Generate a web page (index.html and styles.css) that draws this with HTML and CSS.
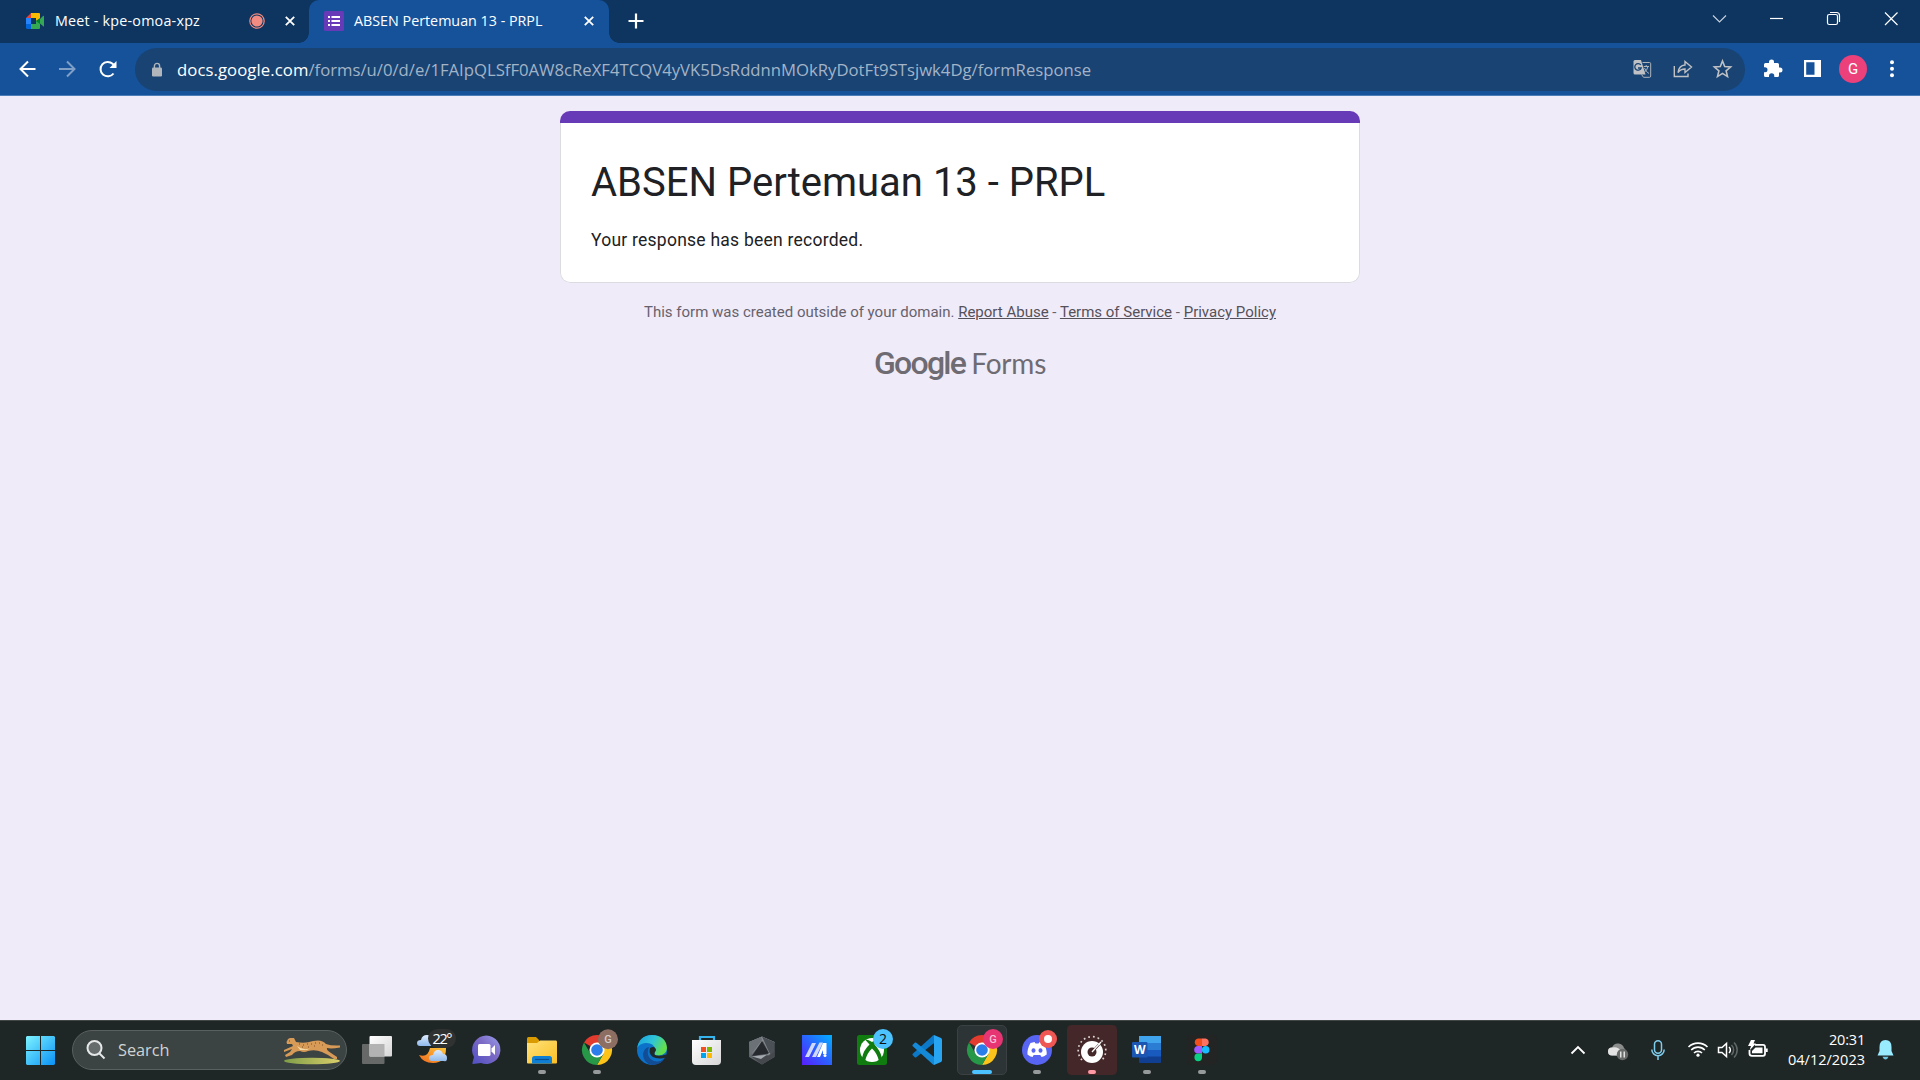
FILE: index.html
```html
<!DOCTYPE html>
<html lang="id">
<head>
<meta charset="utf-8">
<title>ABSEN Pertemuan 13 - PRPL</title>
<link rel="stylesheet" href="styles.css">
</head>
<body>
<svg class="defs" width="0" height="0">
  <defs>
    <linearGradient id="winblue" x1="0" y1="0" x2="1" y2="1"><stop offset="0" stop-color="#7df3ff"/><stop offset="1" stop-color="#0a91f5"/></linearGradient>
    <linearGradient id="chatg" x1="1" y1="0" x2="0" y2="1"><stop offset="0" stop-color="#9aa0ee"/><stop offset=".45" stop-color="#7b69c4"/><stop offset="1" stop-color="#4f4fc4"/></linearGradient>
    <linearGradient id="folder" x1="0" y1="0" x2="1" y2="1"><stop offset="0" stop-color="#ffe27a"/><stop offset="1" stop-color="#fbbf24"/></linearGradient>
    <linearGradient id="edgetop" x1="0" y1="0" x2="1" y2=".4"><stop offset="0" stop-color="#1a9fe0"/><stop offset=".55" stop-color="#2fc4d8"/><stop offset="1" stop-color="#63df4c"/></linearGradient>
    <linearGradient id="asus" x1="0" y1="1" x2="1" y2="0"><stop offset="0" stop-color="#5a1cff"/><stop offset=".5" stop-color="#2b62ff"/><stop offset="1" stop-color="#00b0ff"/></linearGradient>
    <linearGradient id="white" x1="0" y1="0" x2="1" y2="1"><stop offset="0" stop-color="#fff"/><stop offset="1" stop-color="#d6d6d6"/></linearGradient>
    <linearGradient id="cloud" x1="0" y1="0" x2="0" y2="1"><stop offset="0" stop-color="#dcebff"/><stop offset="1" stop-color="#8fb9ea"/></linearGradient>
    <linearGradient id="moon" x1="0" y1="1" x2="1" y2="0"><stop offset="0" stop-color="#f0691c"/><stop offset="1" stop-color="#ffc53a"/></linearGradient>
    <linearGradient id="grass" x1="0" y1="0" x2="1" y2="0"><stop offset="0" stop-color="#7f9d48"/><stop offset="1" stop-color="#d9cf6a"/></linearGradient>
    <g id="chrome">
      <path d="M27 30 14 22.5A15 15 0 0 1 40 22.5H27Z" fill="#e33b2e"/>
      <path d="M40 22.5A15 15 0 0 1 27 45L33.5 33.7 27 22.5Z" fill="#fcc31b"/>
      <path d="M14 22.5A15 15 0 0 0 27 45L33.5 33.7 27 30 20.5 33.7Z" fill="#279847"/>
      <circle cx="27" cy="30" r="7.6" fill="#fff"/><circle cx="27" cy="30" r="5.8" fill="#2b7de9"/>
    </g>
  </defs>
</svg>

<header class="browser">
  <div class="tabstrip">
    <div class="tab">
      <svg class="favicon" width="20" height="20" viewBox="0 0 20 20"><path d="M1 7 6 2V7Z" fill="#ea4335"/><path d="M6 2H14Q15 2 15 3V8L11 10V7H6Z" fill="#fbbc04"/><path d="M1 7H6V13H1Z" fill="#2684fc"/><path d="M1 13H6V18H2.500Q1 18 1 16.500Z" fill="#0066da"/><path d="M6 13H11V10L15 8 18 5Q19 4.500 19 5.500V15Q19 16 18 15L15 12.500V17Q15 18 14 18H6Z" fill="#34a853"/><path d="M11 10 15 7V13Z" fill="#00832d"/></svg>
      <span class="tab-title meet-title">Meet - kpe-omoa-xpz</span>
      <svg class="rec" width="16" height="16" viewBox="0 0 16 16"><circle cx="8" cy="8" r="7.200" fill="none" stroke="#f28b82" stroke-width="1.200"/><circle cx="8" cy="8" r="5.600" fill="#f28b82"/></svg>
      <svg class="x" width="10" height="10" viewBox="0 0 10 10"><path d="M.8.8 9.200 9.200M9.200.8.8 9.200"/></svg>
    </div>
    <div class="tab active">
      <svg class="favicon" width="20" height="20" viewBox="0 0 20 20"><rect width="20" height="20" rx="1.500" fill="#673ab7"/><path d="M4 5H6V7H4ZM4 9H6V11H4ZM4 13H6V15H4ZM7.500 5H16V7H7.500ZM7.500 9H16V11H7.500ZM7.500 13H16V15H7.500Z" fill="#fff"/></svg>
      <span class="tab-title form-title">ABSEN Pertemuan 13 - PRPL</span>
      <svg class="x" width="10" height="10" viewBox="0 0 10 10"><path d="M.8.8 9.200 9.200M9.200.8.8 9.200"/></svg>
    </div>
    <svg class="plus" width="16" height="16" viewBox="0 0 16 16"><path d="M8 .5V15.500M.5 8H15.500" stroke="#fff" stroke-width="2.200"/></svg>
    <svg class="controls" width="190" height="30" viewBox="1710 5 190 30" fill="none" stroke="#fff" stroke-width="1.200">
      <path d="M1713 15.500 1719.500 22 1726 15.500" stroke="#c4d0dd"/><path d="M1770 18.500H1783"/>
      <rect x="1827.500" y="14.500" width="10" height="10" rx="1.800"/><path d="M1830 12.500H1836.500Q1839.500 12.500 1839.500 15.500V22"/>
      <path d="M1885 12.500 1897.500 25M1897.500 12.500 1885 25"/>
    </svg>
  </div>
  <div class="toolbar">
    <svg class="nav" width="115" height="30" viewBox="10 54 115 30" fill="none" stroke="#fff" stroke-width="2">
      <path d="M35.500 69H21M28 61.500 20.500 69 28 76.500"/>
      <path d="M59 69H74M67 61.500 74.500 69 67 76.500" stroke="#7f9fc7"/>
      <path d="M113.500 73.500A7.200 7.200 0 1 1 112.600 63.800L115.200 66.400"/><path d="M116.500 61V68H109.500Z" fill="#fff" stroke="none"/>
    </svg>
    <div class="omnibox">
      <svg class="lock" width="12" height="15" viewBox="0 0 12 15"><rect x="1" y="5.500" width="10" height="9" rx="1.200" fill="#b0b6bb"/><path d="M3.400 6.500V4A2.600 2.600 0 0 1 8.600 4V6.500" fill="none" stroke="#b0b6bb" stroke-width="1.400"/></svg>
      <div class="url"><span class="host">docs.google.com</span><span class="path">/forms/u/0/d/e/1FAIpQLSfF0AW8cReXF4TCQV4yVK5DsRddnnMOkRyDotFt9STsjwk4Dg/formResponse</span></div>
      <svg class="actions" width="102" height="24" viewBox="1631 58 102 24">
        <path d="M1635 61H1641L1645.500 75.500H1635Q1633.500 75.500 1633.500 74V62.500Q1633.500 61 1635 61Z" fill="#bfc1c4"/>
        <path d="M1642.500 63.500H1649.500Q1650.700 63.500 1650.700 64.700V77Q1650.700 78.300 1649.500 78.300H1643.500L1641.500 75.500" fill="none" stroke="#aeb4bb" stroke-width="1"/>
        <path d="M1640.800 66A3.300 3.300 0 1 0 1641.200 69H1638" fill="none" stroke="#194373" stroke-width="1.300"/>
        <path d="M1643.700 67.500H1649M1646.200 66V67.500M1648 67.500Q1647 71.500 1644.500 73M1644.500 69Q1646 73 1649 74.500" fill="none" stroke="#aeb4bb" stroke-width="1"/>
        <path d="M1674.300 67V77.500H1688V74.500M1678 73.500Q1679 66.500 1685 66V62.500L1691.500 68 1685 73.500V70Q1680.500 70 1678 73.500Z" fill="none" stroke="#bfc1c4" stroke-width="1.400"/>
        <path d="M1722.500 62 1724.700 67.600 1730.600 68 1726.100 71.800 1727.500 77.600 1722.500 74.400 1717.500 77.600 1718.900 71.800 1714.400 68 1720.300 67.600Z" fill="none" stroke="#bfc1c4" stroke-width="1.600"/>
      </svg>
    </div>
    <svg class="ext" width="66" height="30" viewBox="1760 54 66 30">
      <path d="M1765.500 63H1769V62A2.500 2.500 0 0 1 1774 62V63H1777.500Q1779 63 1779 64.500V67.500H1780A2.500 2.500 0 0 1 1780 72.500H1779V75.500Q1779 77 1777.500 77H1774.300V76A2.500 2.500 0 0 0 1769 76V77H1765.500Q1764 77 1764 75.500V72.300H1765A2.500 2.500 0 0 0 1765 67.300H1764V64.500Q1764 63 1765.500 63Z" fill="#fff"/>
      <path d="M1804 60H1821V77H1804ZM1806.200 62.300V74.700H1814.500V62.300Z" fill="#fff" fill-rule="evenodd"/>
    </svg>
    <div class="avatar">G</div>
    <svg class="dots" width="6" height="20" viewBox="0 0 6 20" fill="#fff"><circle cx="3" cy="3.300" r="2"/><circle cx="3" cy="9.800" r="2"/><circle cx="3" cy="16.300" r="2"/></svg>
  </div>
</header>

<main class="page">
  <section class="card">
    <div class="card-accent"></div>
    <div class="card-body">
      <h1>ABSEN Pertemuan 13 - PRPL</h1>
      <p>Your response has been recorded.</p>
    </div>
  </section>
  <div class="disclaimer">This form was created outside of your domain. <u>Report Abuse</u> - <u>Terms of Service</u> - <u>Privacy Policy</u></div>
  <div class="logo"><span class="google">Google</span><span class="forms">Forms</span></div>
</main>

<footer class="taskbar">
  <svg class="start" width="29" height="29" viewBox="0 0 29 29"><path d="M1 0H14V14H0V1ZM15 0H28L29 1V14H15ZM0 15H14V29H1L0 28ZM15 15H29V28L28 29H15Z" fill="url(#winblue)"/></svg>
  <div class="search">
    <svg width="20" height="20" viewBox="0 0 20 20" fill="#666b6c" stroke="#e6e8e8" stroke-width="2"><circle cx="8.500" cy="8" r="7"/><path d="M13.500 13.500 18.500 18.500"/></svg>
    <span class="search-label">Search</span>
    <svg class="cheetah" width="60" height="34" viewBox="280 1036 60 34">
      <ellipse cx="312" cy="1064" rx="28" ry="3.200" fill="url(#grass)"/>
      <path d="M288 1042 290 1041 294 1041 296 1045Q305 1047 313 1044Q322 1042 326 1047Q331 1049 340 1048.500V1050.500Q331 1052 327 1051Q326 1053 331 1056L337 1060V1062H334L328 1058 322 1055Q315 1052 308 1054Q304 1056 300 1054Q295 1054 292 1058L286 1060 285 1058 290 1055 292 1052 284 1055V1053L293 1049 292 1047 287 1047 286.500 1045Z" fill="#d79b57"/>
      <path d="M297 1049Q305 1055 312 1050L307 1053 300 1053Z" fill="#f4d9a6"/>
      <path d="M299 1047h1m3 1h1m3-1h1m3 0h1m3-1h1m3 0h1m2 2h1m-9 1h1m-7 1h1m-7 0h1m-14-6h1" stroke="#7c4c25" stroke-width="1"/>
    </svg>
  </div>
  <nav class="apps">
    <svg viewBox="0 0 55 60"><rect x="12" y="24" width="22.500" height="20" rx="1" fill="#676868"/><rect x="19.500" y="16" width="22.500" height="20.500" rx="1" fill="url(#white)"/><path d="M19.500 24H34.500V36.500H19.500Z" fill="#b3b3b3"/></svg>
    <svg viewBox="0 0 55 60"><path d="M15 26Q12 26 12 23T16 20Q17 15 22 15T27 20V26Z" fill="url(#cloud)"/><path d="M14 35Q23 38 25 28H41Q41 43 28 43Q18 43 14 35Z" fill="url(#moon)"/><path d="M27 41Q24 41 24 38T28 35Q29 30 33 30T38 34Q42 34 42 38T39 41Z" fill="url(#cloud)"/><rect x="23" y="9" width="28" height="19" rx="9.500" fill="#303131"/><text x="27.500" y="24" class="temp" textLength="20">22°</text></svg>
    <svg viewBox="0 0 55 60"><path d="M13 44Q12 44 12.500 42.500L14 37A14.200 14.200 0 1 1 21 43Z" fill="url(#chatg)"/><rect x="18" y="24" width="12.500" height="12" rx="1.500" fill="#fff"/><path d="M31.500 28.500 35 25V35L31.500 31.500Z" fill="#fff"/></svg>
    <svg viewBox="0 0 55 60"><path d="M12 18.500Q12 17 13.500 17H21L24 20V26H12Z" fill="#d99b00"/><path d="M12 23H22L25 20.500H41Q42 20.500 42 22V42.500Q42 43.500 41 43.500H13Q12 43.500 12 42.500Z" fill="url(#folder)"/><path d="M17 43.500V38.500Q17 36 19.500 36H34.500Q37 36 37 38.500V43.500Z" fill="#0f7fd4"/><path d="M20 39.500H34" stroke="#0a4f91" stroke-width="1.200"/><rect class="dot" x="23" y="50" width="8" height="4" rx="2"/></svg>
    <svg viewBox="0 0 55 60"><use href="#chrome"/><circle cx="38" cy="19.300" r="10" fill="#8d6e63"/><text x="38" y="23.300" class="badge" fill="#d7ccc8">G</text><rect class="dot" x="23" y="50" width="8" height="4" rx="2"/></svg>
    <svg viewBox="0 0 55 60"><circle cx="27" cy="30" r="15" fill="#0c72c9"/><path d="M12.200 28Q14 15.500 27 15Q41 15.500 42 28Q41.500 35 34 35.500Q29 35.500 29.500 33Q31 31 30.500 29Q28 22 20 23Q14 24 12.200 28Z" fill="url(#edgetop)"/><path d="M24 27Q20 37 29 41Q35 42.500 40 38Q36 45 27 45Q18 43 18 34Q19 28 24 27Z" fill="#124c94"/><path d="M25 28Q30 25 31 30Q29 33 29.500 34.500Q32 37 41 34.500L42 36Q40 38.500 36 38.500Q26 39 24.500 32Z" fill="#20282a"/></svg>
    <svg viewBox="0 0 55 60"><path d="M20 22V17H34V22" fill="none" stroke="#35b4ee" stroke-width="2.200"/><path d="M12 20H41V41Q41 45 37 45H16Q12 45 12 41Z" fill="url(#white)"/><path d="M21 27H26V32H21Z" fill="#f25022"/><path d="M27 27H32V32H27Z" fill="#7fba00"/><path d="M21 33H26V38H21Z" fill="#00a4ef"/><path d="M27 33H32V38H27Z" fill="#ffb900"/></svg>
    <svg viewBox="0 0 55 60"><path d="M27 16.500 39.500 22V37L27 44.500 14 37V22Z" fill="#60656b"/><path d="M27 16.500 39.500 22 35 35 28 21 17 34 14 22Z" fill="#858b91"/><path d="M27 21 34 33.500 17 36Z" fill="#262a2e"/><path d="M14 22 26 17 27 20 15 36Z" fill="#6b7177"/><path d="M17 37 34 35.500 39 31V37L27 44.500Z" fill="#45494e"/><path d="M17 36.500 34 34.500 37 31 26 39Z" fill="#a4aab0"/><path d="M27 16.500 39 22V32L35 34Z" fill="#4b5056"/></svg>
    <svg viewBox="0 0 55 60"><path d="M12 15H42V45H12Z" fill="url(#asus)"/><path d="M15 37 22 23H26L19 37ZM22 37 29.500 22.500H33L26 37Z" fill="#cfd8ff"/><path d="M27 37 33 23H36.500V34H33V30L30 37Z" fill="#fff"/><circle cx="35" cy="35.500" r="1.500" fill="#fff"/></svg>
    <svg viewBox="0 0 55 60"><rect x="12" y="15" width="30" height="30" rx="2.500" fill="#107c10"/><circle cx="27" cy="30" r="12" fill="#fff"/><path d="M20 19.500Q23 19 27 22Q31 19 34 19.500L29.500 24.500Q35 30 37 38L34 41Q32 33 27 28.500Q22 33 20 41L17 38Q18.500 30 24.500 24.500Z" fill="#107c10"/><circle cx="38" cy="19" r="10" fill="#4cc2ff"/><text x="38" y="24" class="count">2</text></svg>
    <svg viewBox="0 0 55 60"><path d="M34 15 41 18Q42 18.500 42 20V40Q42 41.500 41 42L34 45Z" fill="#27a5f2"/><path d="M34 15V23L16 37.500 15 37.500 12.500 35V34L33 15.500Z" fill="#0b79c8"/><path d="M34 45V37L16 22.500H15L12.500 25V26L33 44.500Z" fill="#1389d8"/></svg>
    <svg viewBox="0 0 55 60"><rect x="2.500" y="5.500" width="49" height="49" rx="4.500" fill="#2d3435" stroke="#3b4142"/><use href="#chrome"/><circle cx="38" cy="19" r="10" fill="#e73472"/><text x="38" y="23" class="badge" fill="#f8c2d5">G</text><rect x="17" y="50" width="20" height="4" rx="2" fill="#4cc2ff"/></svg>
    <svg viewBox="0 0 55 60"><circle cx="27" cy="30" r="15" fill="#5865f2"/><path d="M20.500 23 24.500 22 25.500 23.500H28.500L29.500 22 33.500 23Q37 29 36.700 34.500Q34 36.800 31.500 37L30.300 35H23.700L22.500 37Q20 36.800 17.500 34.500Q17 29 20.500 23Z" fill="#fff"/><ellipse cx="23.500" cy="30.500" rx="2" ry="2.300" fill="#5865f2"/><ellipse cx="30.500" cy="30.500" rx="2" ry="2.300" fill="#5865f2"/><circle cx="38" cy="19" r="9" fill="#ef5754"/><circle cx="38" cy="19" r="4" fill="#fff"/><rect class="dot" x="23" y="50" width="8" height="4" rx="2"/></svg>
    <svg viewBox="0 0 55 60"><rect x="2" y="5" width="50" height="50" rx="4.500" fill="#442728"/><circle cx="27" cy="32" r="11" fill="#fff"/><circle cx="27" cy="32" r="4.500" fill="#442728"/><path d="M28.500 30.500 34 24.500" stroke="#442728" stroke-width="2.400"/><path d="M27 32 36 22" stroke="#fff" stroke-width="1.300"/><path d="M17 40A13.800 13.800 0 1 1 37 40" fill="none" stroke="#ddd5d5" stroke-width="1.700" stroke-dasharray="1.700 3"/><rect x="23" y="50" width="8" height="4" rx="2" fill="#ff99a4"/></svg>
    <svg viewBox="0 0 55 60"><rect x="19" y="16" width="22" height="27" rx="1" fill="#103f91"/><path d="M19 16H41V23H19Z" fill="#41a5ee"/><path d="M19 23H41V30H19Z" fill="#2b7cd3"/><path d="M19 30H41V36.500H19Z" fill="#185abd"/><rect x="12" y="22" width="15.500" height="15.500" rx="1" fill="#1b56b3"/><text x="19.700" y="34.300" class="word">W</text><rect class="dot" x="23" y="50" width="8" height="4" rx="2"/></svg>
    <svg viewBox="0 0 55 60"><rect x="12" y="15" width="30" height="30" rx="5" fill="#232424"/><path d="M27 18.500H23A3.800 3.800 0 0 0 23 26H27Z" fill="#f24e1e"/><path d="M27 18.500H30.500A3.800 3.800 0 0 1 30.500 26H27Z" fill="#ff7262"/><path d="M27 26H23A3.800 3.800 0 0 0 23 33.600H27Z" fill="#a259ff"/><circle cx="30.700" cy="29.800" r="3.800" fill="#1abcfe"/><path d="M27 33.600H23A3.800 3.800 0 1 0 27 37.500Z" fill="#0acf83"/><rect class="dot" x="23" y="50" width="8" height="4" rx="2"/></svg>
  </nav>
  <svg class="tray" width="206" height="60" viewBox="1566 0 206 60" fill="none" stroke="#fff" stroke-width="1.800">
    <path d="M1571.500 33.500 1578 27 1584.500 33.500"/>
    <path d="M1612 35.500A4 4 0 0 1 1612 27.500Q1614 23 1618.500 23.500Q1623 24 1624 28Q1627 30 1625 35.500Z" fill="#8b8d8d" stroke="none"/><path d="M1612 35.500A4 4 0 0 1 1612 27.500Q1618 26 1621 31V35.500Z" fill="#e3e3e3" stroke="none"/><circle cx="1622.500" cy="34.500" r="5.700" fill="#686a6a" stroke="none"/><path d="M1620.800 31.500V37.500M1624.200 31.500V37.500" stroke-width="1.200"/>
    <g stroke="#7fcdec" stroke-width="1.500"><rect x="1654.500" y="20.800" width="7" height="12.500" rx="3.500"/><path d="M1651.800 29.500A6.200 6.200 0 0 0 1664.200 29.500M1658 36V40"/></g>
    <g stroke-width="1.600"><path d="M1688.500 27A13.500 13.500 0 0 1 1707.500 27M1691.200 30A9.500 9.500 0 0 1 1704.800 30M1694 33A5.700 5.700 0 0 1 1702 33"/><circle cx="1698" cy="35.200" r="1.600" fill="#fff" stroke="none"/></g>
    <g stroke-width="1.500"><path d="M1718.500 27.500H1722L1726.500 23.500V36.500L1722 32.500H1718.500Z"/><path d="M1729 27A4 4 0 0 1 1729 33"/><path d="M1731.500 25A7 7 0 0 1 1731.500 35M1734 22.500A10.500 10.500 0 0 1 1734 37.500" stroke="#606767"/></g>
    <path d="M1755 24.800H1763Q1765 24.800 1765 27V33.500Q1765 35.800 1763 35.800H1752Q1749.500 35.800 1749.500 33.500V30"/><path d="M1755.500 27.500H1762.500V33.300H1752V31Z" fill="#fff" stroke="none"/><path d="M1766.700 28.500V32" stroke-width="2"/><path d="M1751 20H1755L1753.500 23.500H1756L1749.500 30.500 1751 26H1748Z" fill="#fff" stroke="none"/>
  </svg>
  <div class="clock"><span class="time">20:31</span><span class="date">04/12/2023</span></div>
  <svg class="bell" width="17" height="20" viewBox="0 0 17 20"><path d="M8.500 0Q14.500 0 14.500 7V11L16.500 15.500H.5L2.500 11V7Q2.500 0 8.500 0Z" fill="#99ebff"/><path d="M5.500 16.800H11.500Q10.500 19.500 8.500 19.500T5.500 16.800Z" fill="#6fc6e0"/></svg>
</footer>
</body>
</html>
```
FILE: styles.css
```css
* { box-sizing: border-box; }
body { margin: 0; width: 1920px; height: 1080px; overflow: hidden; display: flex; flex-direction: column; background: #f0ebf8; font-family: "Open Sans", "Noto Sans", sans-serif; }
svg { display: block; flex: none; }
.defs { position: absolute; }
.browser { height: 96px; flex: none; background: #15529a; border-bottom: 1px solid #4b7eb8; color: #fff; }
.tabstrip { height: 43px; display: flex; align-items: center; background: #0d3560; }
.tab { width: 309px; height: 43px; display: flex; align-items: center; padding: 0 14px 1px 25px; font-size: 14.3px; white-space: nowrap; }
.tab.active { width: 300px; padding: 0 15px 1px 15px; background: #15529a; border-radius: 10px 10px 0 0; position: relative; }
.tab.active::before, .tab.active::after { content: ""; position: absolute; bottom: 0; width: 10px; height: 10px; }
.tab.active::before { left: -10px; background: radial-gradient(circle at 0 0, transparent 9.5px, #15529a 10px); }
.tab.active::after { right: -10px; background: radial-gradient(circle at 100% 0, transparent 9.5px, #15529a 10px); }
.tab-title { margin: 0 auto 2px 10px; }
.meet-title { letter-spacing: .22px; }
.rec { margin-right: 20px; }
.x { fill: none; stroke: #fff; stroke-width: 1.8; }
.plus { margin: 0 auto 1px 19px; }
.controls { margin-right: 20px; margin-bottom: 3px; }
.toolbar { height: 52px; display: flex; align-items: center; padding-left: 10px; }
.omnibox { width: 1610px; height: 43px; margin-left: 10px; padding: 0 12px 0 16px; border-radius: 22px; background: #194373; display: flex; align-items: center; }
.url { margin: 1px auto 0 14px; font-size: 16.7px; color: #a3b4c7; white-space: nowrap; display: flex; }
.host { color: #fff; letter-spacing: .08px; }
.ext { margin-left: 15px; }
.avatar { width: 28px; height: 28px; margin-left: 13px; border-radius: 50%; background: #ec407a; font: 15px/28px Roboto, sans-serif; text-align: center; }
.dots { margin-left: 22px; }
.page { flex: 1; display: flex; flex-direction: column; align-items: center; padding-top: 15px; font-family: Roboto, sans-serif; }
.card { width: 800px; height: 172px; border-radius: 10px; overflow: hidden; display: flex; flex-direction: column; color: #202124; }
.card-accent { height: 12px; background: #673ab7; }
.card-body { flex: 1; padding: 35px 30px 0; background: #fff; border: 1px solid #dadce0; border-top: 0; border-radius: 0 0 10px 10px; }
h1 { margin: 0; font-size: 40px; font-weight: 400; line-height: 50px; }
p { margin: 20px 0 0; font-size: 17.5px; line-height: 25px; letter-spacing: .24px; }
.disclaimer { margin-top: 19px; font-size: 15px; line-height: 20px; color: #66626d; white-space: nowrap; }
.disclaimer u { color: #55515b; }
.logo { margin-top: 22px; height: 40px; display: flex; align-items: baseline; gap: 6px; font-family: Lato, sans-serif; color: #6e6b73; }
.google { font: 500 32px Roboto, sans-serif; letter-spacing: -1.7px; }
.forms { font-size: 28px; letter-spacing: -.2px; }
.taskbar { height: 60px; flex: none; display: flex; align-items: center; padding: 0 0 1px 26px; background: #1f2626; border-top: 1px solid #414646; color: #fff; }
.search { width: 275px; height: 40px; margin-left: 17px; padding: 0 6px 0 13px; border: 1px solid #5a5f60; border-radius: 20px; background: #3c4343; display: flex; align-items: center; }
.search-label { margin: 0 auto 0 12px; font-size: 16.3px; color: #d0d3d3; }
.apps { display: flex; margin-left: 3px; }
.apps svg { width: 55px; height: 60px; }
.dot { fill: #969a9a; }
.temp { font: 14.5px "Open Sans", sans-serif; fill: #fff; }
.badge { font: 500 11px Roboto, sans-serif; text-anchor: middle; }
.count { font: 14px "Open Sans", sans-serif; fill: #111; text-anchor: middle; }
.word { font: 700 12px "Open Sans", sans-serif; fill: #fff; text-anchor: middle; }
.tray { margin-left: auto; }
.clock { width: 93px; margin-bottom: 1px; display: flex; flex-direction: column; align-items: flex-end; font-size: 14.5px; line-height: 20px; }
.time { letter-spacing: -.2px; }
.bell { margin: 0 26px 0 12px; }
```
